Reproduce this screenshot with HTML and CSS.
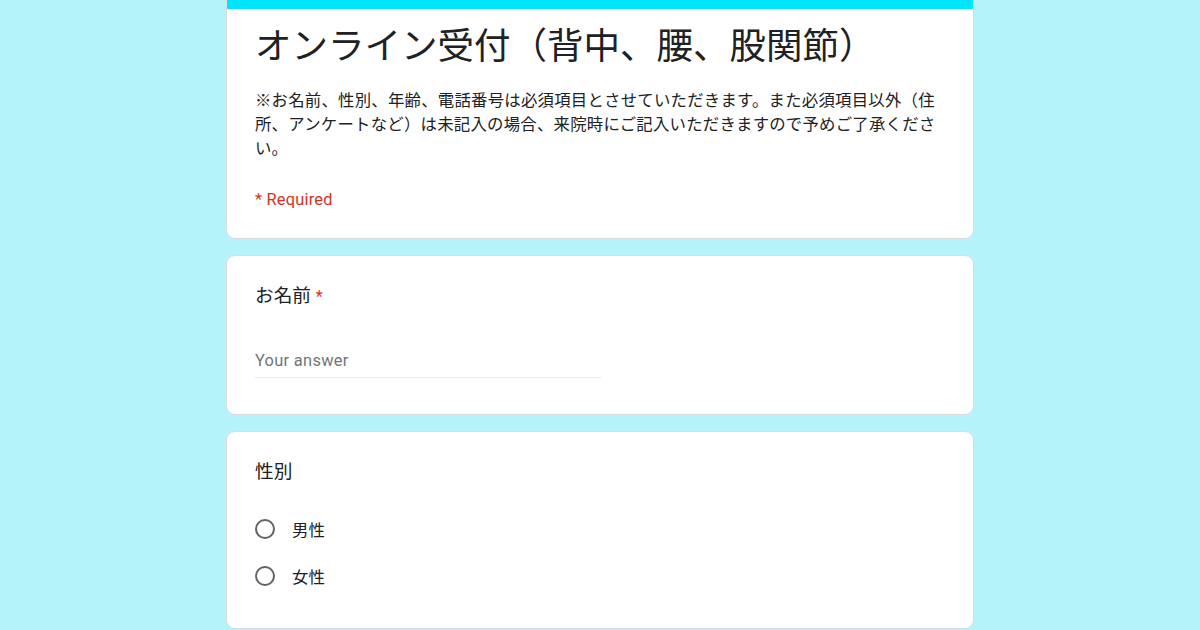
FILE: index.html
```html
<!DOCTYPE html>
<html lang="ja">
<head>
<meta charset="utf-8">
<title>オンライン受付（背中、腰、股関節）</title>
<link rel="stylesheet" href="styles.css">
</head>
<body>
<div class="form">
    <div class="card head">
        <div class="bar"></div>
        <div class="head-body">
            <h1 class="title">オンライン受付（背中、腰、股関節）</h1>
            <p class="desc">※お名前、性別、年齢、電話番号は必須項目とさせていただきます。また必須項目以外（住所、アンケートなど）は未記入の場合、来院時にご記入いただきますので予めご了承ください。</p>
            <p class="req">* Required</p>
        </div>
    </div>

    <div class="card item">
        <div class="q">お名前 <span class="star">*</span></div>
        <div class="answer">Your answer</div>
    </div>

    <div class="card item">
        <div class="q">性別</div>
        <ul class="opts">
            <li><span class="radio"></span>男性</li>
            <li><span class="radio"></span>女性</li>
        </ul>
    </div>
</div>
</body>
</html>
```

FILE: styles.css
```css
* { margin: 0; padding: 0; box-sizing: border-box; }
body { background: #b3f4fb; font-family: Roboto, "Noto Sans CJK JP", sans-serif; color: #202124; overflow: hidden; }
ul { list-style: none; }

.form { width: 748px; margin: 0 auto; display: flex; flex-direction: column; gap: 16px; }
.card { background: #fff; border: 1px solid #dadce0; border-radius: 9px; }

.head { border-top: 0; border-radius: 0 0 9px 9px; overflow: hidden; height: 239px; }
.bar { height: 9px; background: #00e5ff; }
.head-body { padding: 15px 28px 0 28px; }
.title { font-size: 36.5px; font-weight: 400; line-height: 46px; }
.desc { margin-top: 19px; font-size: 16.4px; line-height: 24px; letter-spacing: 0.23px; }
.req { margin-top: 27px; font-size: 16.4px; line-height: 24px; color: #d93025; letter-spacing: 0.2px; }

.item { padding: 28px 28px 0 28px; }
.item:nth-child(2) { height: 160px; }
.item:nth-child(3) { height: 198px; }
.q { font-size: 18.7px; line-height: 24px; }
.star { color: #d93025; font-size: 16px; }

.answer { margin-top: 40px; width: 346px; font-size: 16.4px; line-height: 24px; color: #70757a; letter-spacing: 0.3px; padding-bottom: 4px; border-bottom: 1px solid #e8eaed; }

.opts { margin-top: 21px; }
.opts li { display: flex; align-items: center; height: 47px; font-size: 16.4px; }
.radio { width: 20px; height: 20px; border: 2px solid #5f6368; border-radius: 50%; margin-right: 17px; }
```
